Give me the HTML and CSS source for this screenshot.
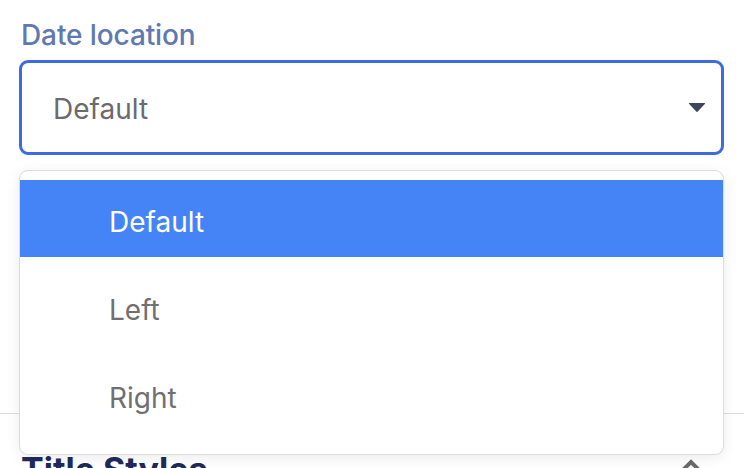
FILE: index.html
```html
<!DOCTYPE html>
<html lang="en">
<head>
<meta charset="utf-8">
<title>Date location</title>
<link rel="stylesheet" href="styles.css">
</head>
<body>
<div class="field">
  <label class="field-label">Date location</label>
  <div class="select-wrap">
    <div class="select">
      <span class="select-value">Default</span>
      <svg class="caret" width="18" height="11" viewBox="0 0 18 11"><path d="M1.5 1 H16.5 Q17.6 1 16.8 1.9 L9.8 9.6 Q9 10.4 8.2 9.6 L1.2 1.9 Q0.4 1 1.5 1 Z" fill="#3e4560"/></svg>
    </div>
    <ul class="menu">
      <li class="option active">Default</li>
      <li class="option">Left</li>
      <li class="option">Right</li>
    </ul>
  </div>
</div>
<div class="section-head">
  <h2 class="section-title">Title Styles</h2>
  <svg class="chevron" width="22" height="14" viewBox="0 0 22 14"><path d="M3 12 L11 4 L19 12" fill="none" stroke="#6b6b6b" stroke-width="4"/></svg>
</div>
</body>
</html>
```

FILE: styles.css
```css
* { box-sizing: border-box; }
html, body { margin: 0; padding: 0; background: #ffffff; }
body {
  font-family: Inter, "Noto Sans", "Liberation Sans", sans-serif;
  width: 744px;
  height: 468px;
  overflow: hidden;
}
.field {
  padding: 18px 20px 258px 19px;
}
.field-label {
  display: block;
  font-size: 28px;
  line-height: 34px;
  font-weight: 500;
  color: #6079b0;
  padding-left: 2px;
  margin-bottom: 8px;
  letter-spacing: -0.1px;
}
.select-wrap { position: relative; }
.select {
  height: 95px;
  border: 3px solid #3d6be0;
  border-radius: 9px;
  display: flex;
  align-items: center;
  justify-content: space-between;
  padding: 2px 15px 0 31px;
  background: #fff;
}
.select-value {
  font-size: 28px;
  color: #6b6b6b;
}
.caret { display: block; margin-top: -2px; }
.menu {
  position: absolute;
  top: 110px;
  left: 0;
  right: 0;
  height: 285px;
  margin: 0;
  padding: 9px 0 0;
  list-style: none;
  background: #fff;
  border: 1px solid #dcdcdc;
  border-radius: 9px;
  box-shadow: 0 3px 14px rgba(0, 0, 0, 0.08);
  z-index: 2;
}
.option {
  height: 77px;
  margin-bottom: 11px;
  display: flex;
  align-items: center;
  padding: 7px 0 0 89px;
  font-size: 28px;
  color: #707070;
}
.option.active {
  background: #4584f7;
  color: #ffffff;
}
.section-head {
  border-top: 1px solid #dddddd;
  display: flex;
  justify-content: space-between;
  align-items: flex-start;
  padding: 36px 42px 0 21px;
}
.section-title {
  margin: 0;
  font-size: 34px;
  line-height: 40px;
  font-weight: 700;
  color: #1f2a5c;
}
.chevron { display: block; margin-top: 8px; }
```
